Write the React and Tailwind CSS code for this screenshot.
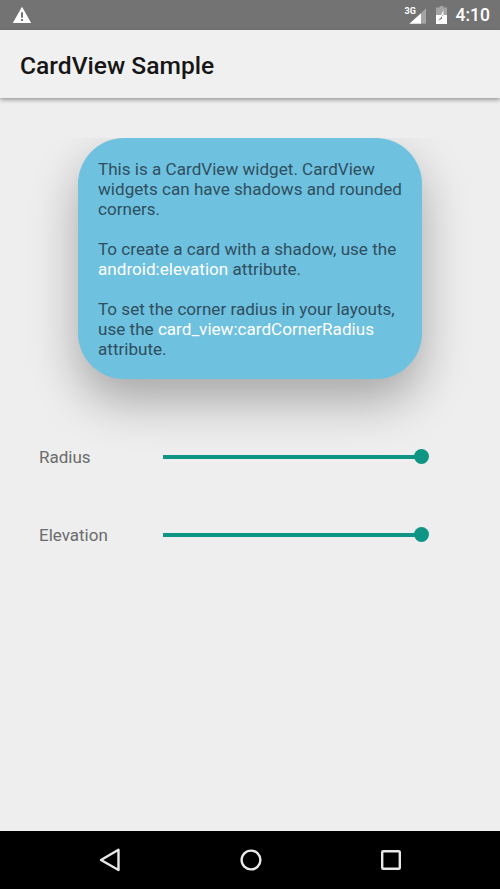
function WarningIcon() {
  return (
    <svg width="20" height="18" viewBox="0 0 20 18">
      <path fill="#fff" fillRule="evenodd" d="M10 .8 19.2 17H.8ZM9 6.2v5.6h2V6.2ZM9 13v2h2v-2Z" />
    </svg>
  );
}

function SignalIcon() {
  return (
    <svg width="18" height="16" viewBox="0 0 18 16">
      <path fill="#fff" fillOpacity="0.35" d="M17 .3V15.7H12V5.2Z" />
      <path fill="#fff" d="M12 5.2V15.7H.3Z" />
    </svg>
  );
}

function BatteryIcon() {
  return (
    <svg width="11" height="18" viewBox="0 0 11 18">
      <path fill="#fff" fillOpacity="0.35" d="M3.5 0h4v1.5H11V9H0V1.5h3.5Z" />
      <path fill="#fff" fillRule="evenodd" d="M0 9h11v9H0ZM7 9 2 15l4-2.5V9Z" />
      <path fill="#fff" fillOpacity="0.9" d="M7.5 4 5 9h2.5Z" />
    </svg>
  );
}

function Slider({ label }) {
  return (
    <div className="flex items-center h-[20px]">
      <span className="w-[124px] text-[17px] text-[#6b6b6b] mt-[2px]">{label}</span>
      <div className="relative w-[259px] h-[4px] bg-[#0f9583]">
        <div className="absolute right-[-7px] top-[-6px] w-[15px] h-[15px] rounded-full bg-[#0f9583]" />
      </div>
    </div>
  );
}

export default function App() {
  return (
    <div className="w-[500px] h-[889px] flex flex-col bg-[#eeeeee] overflow-hidden font-['Roboto',sans-serif]">
      <div className="h-[30px] shrink-0 bg-[#737373] flex items-center pl-[12px] pr-[10px]">
        <WarningIcon />
        <div className="ml-auto flex items-center">
          <span className="relative z-10 w-[11px] text-[9px] font-bold text-white leading-none self-start mt-[5px]">3G</span>
          <span className="ml-[-7px] mt-[1px] flex"><SignalIcon /></span>
          <span className="ml-[9px] flex"><BatteryIcon /></span>
          <span className="ml-[9px] text-[17.5px] font-medium text-white">4:10</span>
        </div>
      </div>
      <div className="relative z-10 h-[68px] shrink-0 bg-[#f0f0f0] flex items-center pl-[20px] shadow-[0_2px_4px_rgba(0,0,0,0.35)]">
        <h1 className="text-[24.6px] font-medium text-[#161616] mt-[4px]">CardView Sample</h1>
      </div>
      <div className="flex-1">
        <div className="mt-[40px] overflow-hidden pl-[78px] pb-[100px] pr-[78px]">
          <div className="w-[344px] h-[241px] rounded-[46px] bg-[#6ec1df] pl-[20px] pr-[18px] pt-[21px] text-[17.1px] leading-[20px] text-[#2f4f60] shadow-[0_22px_48px_rgba(0,0,0,0.3)]">
            <p>This is a CardView widget. CardView widgets can have shadows and rounded corners.</p>
            <p className="mt-[20px]">
              To create a card with a shadow, use the <span className="text-white">android:elevation</span> attribute.
            </p>
            <p className="mt-[20px]">
              To set the corner radius in your layouts, use the <span className="text-white">card_view:cardCornerRadius</span> attribute.
            </p>
          </div>
        </div>
        <div className="mt-[-32px] pl-[39px] flex flex-col gap-[58px]">
          <Slider label="Radius" />
          <Slider label="Elevation" />
        </div>
      </div>
      <div className="h-[58px] shrink-0 bg-black flex items-center justify-center gap-[119px]">
        <svg width="22" height="24" viewBox="0 0 22 24">
          <path fill="none" stroke="#e8e8e8" strokeWidth="2.4" strokeLinejoin="round" d="M19.5 1.8V22L2 12Z" />
        </svg>
        <svg width="22" height="22" viewBox="0 0 22 22">
          <circle cx="11" cy="11" r="9.4" fill="none" stroke="#e8e8e8" strokeWidth="2.4" />
        </svg>
        <svg width="20" height="20" viewBox="0 0 20 20">
          <rect x="1.2" y="1.2" width="17.6" height="17.6" rx="1" fill="none" stroke="#e8e8e8" strokeWidth="2.4" />
        </svg>
      </div>
    </div>
  );
}
